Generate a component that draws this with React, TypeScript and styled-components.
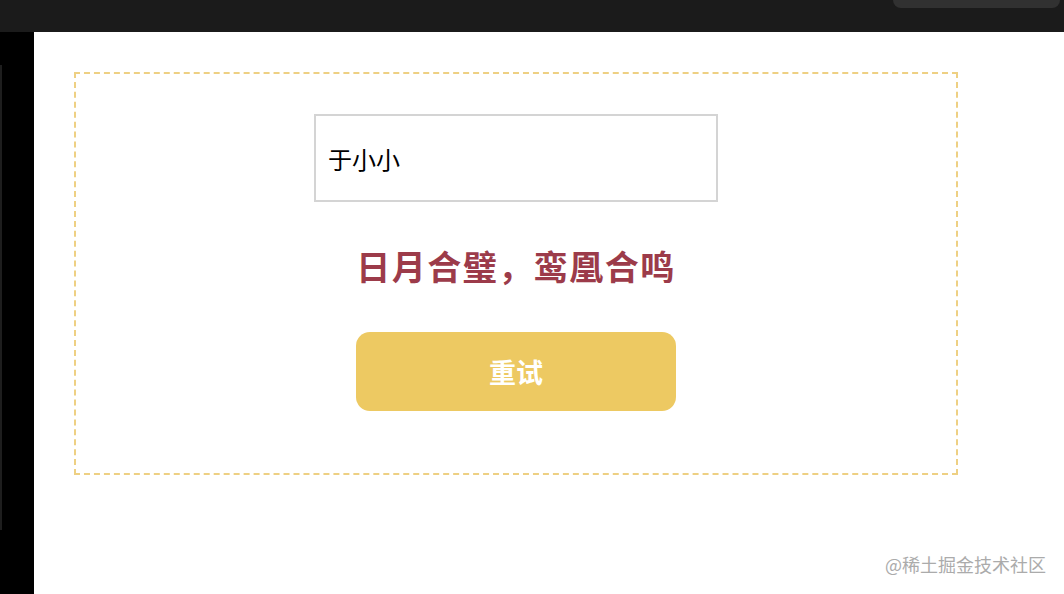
import styled, { createGlobalStyle } from 'styled-components'

const GlobalStyle = createGlobalStyle`
    html, body {
        margin: 0;
        padding: 0;
        width: 1064px;
        height: 594px;
        overflow: hidden;
        background: #ffffff;
        font-family: "Noto Sans CJK SC", "Noto Sans", sans-serif;
    }
`

const Page = styled.div`
    width: 1064px;
    height: 594px;
    display: flex;
    flex-direction: column;
`

const TopBar = styled.div`
    height: 32px;
    background: #1b1b1b;
    display: flex;
    justify-content: flex-end;
    flex-shrink: 0;
`

const TopTab = styled.div`
    width: 167px;
    height: 8px;
    margin-right: 4px;
    background: #313131;
    border-radius: 0 0 8px 8px;
`

const Body = styled.div`
    flex: 1;
    display: flex;
    min-height: 0;
`

const SideStrip = styled.div`
    width: 34px;
    background: #000000;
    padding-top: 33px;
    box-sizing: border-box;
    flex-shrink: 0;
`

const SideEdge = styled.div`
    width: 2px;
    height: 465px;
    background: #1e1e1e;
`

const Main = styled.div`
    flex: 1;
    position: relative;
    background: #ffffff;
    padding: 40px 0 0 40px;
`

const DashedBox = styled.div`
    width: 884px;
    height: 403px;
    box-sizing: border-box;
    border: 2px dashed #eed083;
    display: flex;
    flex-direction: column;
    align-items: center;
    padding-top: 40px;
`

const NameInput = styled.input`
    width: 404px;
    height: 88px;
    box-sizing: border-box;
    border: 2px solid #d4d4d4;
    border-radius: 0;
    padding: 0 12px;
    font-family: "Noto Sans CJK SC", "Noto Sans", sans-serif;
    font-size: 24px;
    color: #000000;
    outline: none;
`

const Blessing = styled.div`
    margin-top: 38px;
    font-size: 34px;
    font-weight: 700;
    letter-spacing: 1.5px;
    line-height: 52px;
    color: #9c3b4a;
`

const RetryButton = styled.button`
    margin-top: 40px;
    width: 320px;
    height: 79px;
    border: none;
    border-radius: 14px;
    background: #edc962;
    color: #ffffff;
    font-family: "Noto Sans CJK SC", "Noto Sans", sans-serif;
    font-size: 27px;
    font-weight: 700;
    cursor: pointer;
`

const Watermark = styled.div`
    position: absolute;
    right: 18px;
    bottom: 17px;
    font-size: 18px;
    color: #ababab;
`

const App = function() {
    return (
        <Page>
            <GlobalStyle />
            <TopBar>
                <TopTab />
            </TopBar>
            <Body>
                <SideStrip>
                    <SideEdge />
                </SideStrip>
                <Main>
                    <DashedBox>
                        <NameInput defaultValue="于小小" />
                        <Blessing>日月合璧，鸾凰合鸣</Blessing>
                        <RetryButton>重试</RetryButton>
                    </DashedBox>
                    <Watermark>@稀土掘金技术社区</Watermark>
                </Main>
            </Body>
        </Page>
    )
}

export default App
